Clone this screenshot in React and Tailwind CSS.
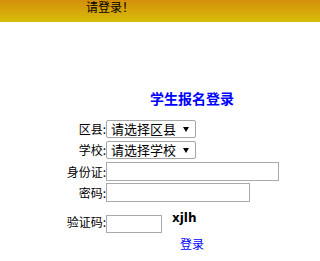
import React from 'react';

function FakeSelect({ text }) {
  return (
    <div className="w-[90px] h-[18px] border border-[#a6a6a6] rounded-[2px] bg-white flex items-center justify-between pl-[4px] pr-[6px] text-[13px] leading-[16px]">
      <span>{text}</span>
      <svg width="6" height="5" viewBox="0 0 6 5">
        <path d="M0 0 L6 0 L3 5 Z" fill="#000" />
      </svg>
    </div>
  );
}

function Row({ label, children, className = '' }) {
  return (
    <div className={'flex items-center ' + className}>
      <span className="w-[106px] text-right text-[12px] leading-[18px] shrink-0">{label}</span>
      {children}
    </div>
  );
}

export default function App() {
  return (
    <div className="w-full h-[261px] bg-white text-black font-['Noto_Sans_CJK_SC',sans-serif]">
      <div className="h-[22px] overflow-hidden bg-gradient-to-b from-[#d48f0a] to-[#d5bd08]">
        <p className="pl-[86px] text-[12px] leading-[13px]">请登录！</p>
      </div>

      <h1 className="mt-[69px] pl-[150px] text-[14px] leading-[14px] font-bold text-[#0000ff]">
        学生报名登录
      </h1>

      <div className="mt-[15px] flex flex-col">
        <Row label="区县:" className="h-[18px]">
          <FakeSelect text="请选择区县" />
        </Row>
        <Row label="学校:" className="h-[18px] mt-[3px]">
          <FakeSelect text="请选择学校" />
        </Row>
        <Row label="身份证:" className="h-[19px] mt-[3px]">
          <input type="text" className="w-[173px] h-[19px] border border-[#a9a9a9] outline-none" />
        </Row>
        <Row label="密码:" className="h-[19px] mt-[2px]">
          <input type="password" className="w-[144px] h-[19px] border border-[#a9a9a9] outline-none" />
        </Row>
        <div className="flex items-start h-[18px] mt-[13px]">
          <span className="w-[106px] text-right text-[12px] leading-[18px] shrink-0 -mt-[2px]">验证码:</span>
          <input type="text" className="w-[56px] h-[18px] border border-[#a9a9a9] outline-none" />
          <span className="ml-[10px] -mt-[3px] text-[12px] leading-[12px] font-bold font-['DejaVu_Sans',sans-serif]">
            xjlh
          </span>
        </div>
        <div className="mt-[5px] pl-[180px] text-[12px] leading-[12px]">
          <a href="#" className="text-[#0000ff]">登录</a>
        </div>
      </div>
    </div>
  );
}
